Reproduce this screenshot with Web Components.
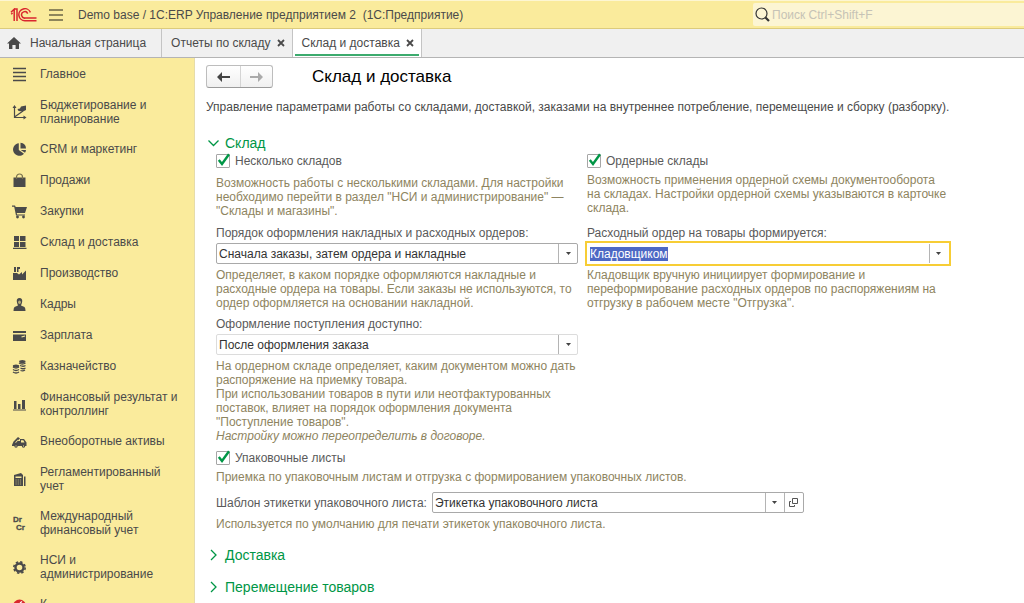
<!DOCTYPE html>
<html lang="ru">
<head>
<meta charset="utf-8">
<title>Склад и доставка</title>
<style>
html, body { margin: 0; height: 100%; overflow: hidden; }
body { font: 12px/14px "Liberation Sans", Arial, sans-serif; color: #4a4a4a; background: #fff; }
</style>
</head>
<body>
<erp-app>
  <title-bar slot="top" caption="Demo base / 1С:ERP Управление предприятием 2&nbsp; (1С:Предприятие)"></title-bar>
  <tab-strip slot="top">
    <page-tab kind="home">Начальная страница</page-tab>
    <page-tab kind="closable">Отчеты по складу</page-tab>
    <page-tab kind="closable" active>Склад и доставка</page-tab>
  </tab-strip>
  <side-nav slot="nav">
    <nav-item icon="menu">Главное</nav-item>
    <nav-item icon="plan">Бюджетирование и планирование</nav-item>
    <nav-item icon="pie">CRM и маркетинг</nav-item>
    <nav-item icon="bag">Продажи</nav-item>
    <nav-item icon="cart">Закупки</nav-item>
    <nav-item icon="boxes">Склад и доставка</nav-item>
    <nav-item icon="factory">Производство</nav-item>
    <nav-item icon="person">Кадры</nav-item>
    <nav-item icon="card">Зарплата</nav-item>
    <nav-item icon="coins">Казначейство</nav-item>
    <nav-item icon="bars">Финансовый результат и контроллинг</nav-item>
    <nav-item icon="truck">Внеоборотные активы</nav-item>
    <nav-item icon="calc">Регламентированный учет</nav-item>
    <nav-item icon="drcr">Международный финансовый учет</nav-item>
    <nav-item icon="gear">НСИ и администрирование</nav-item>
    <nav-item icon="red">К</nav-item>
  </side-nav>
  <settings-page caption="Склад и доставка">
    <span slot="intro">Управление параметрами работы со складами, доставкой, заказами на внутреннее потребление, перемещение и сборку (разборку).</span>
    <form-section caption="Склад" open>
      <form-columns>
        <check-field label="Несколько складов" spaced>Возможность работы с несколькими складами. Для настройки<br>необходимо перейти в раздел "НСИ и администрирование" —<br>"Склады и магазины".</check-field>
        <check-field label="Ордерные склады">Возможность применения ордерной схемы документооборота<br>на складах. Настройки ордерной схемы указываются в карточке<br>склада.</check-field>
        <select-field label="Порядок оформления накладных и расходных ордеров:" value="Сначала заказы, затем ордера и накладные">Определяет, в каком порядке оформляются накладные и<br>расходные ордера на товары. Если заказы не используются, то<br>ордер оформляется на основании накладной.</select-field>
        <combo-field label="Расходный ордер на товары формируется:" value="Кладовщиком">Кладовщик вручную инициирует формирование и<br>переформирование расходных ордеров по распоряжениям на<br>отгрузку в рабочем месте "Отгрузка".</combo-field>
        <select-field muted label="Оформление поступления доступно:" value="После оформления заказа">На ордерном складе определяет, каким документом можно дать<br>распоряжение на приемку товара.<br>При использовании товаров в пути или неотфактурованных<br>поставок, влияет на порядок оформления документа<br>"Поступление товаров".<br><i>Настройку можно переопределить в договоре.</i></select-field>
      </form-columns>
      <check-field label="Упаковочные листы">Приемка по упаковочным листам и отгрузка с формированием упаковочных листов.</check-field>
      <select-field inline label="Шаблон этикетки упаковочного листа:" value="Этикетка упаковочного листа">Используется по умолчанию для печати этикеток упаковочного листа.</select-field>
    </form-section>
    <form-section caption="Доставка"></form-section>
    <form-section caption="Перемещение товаров"></form-section>
  </settings-page>
</erp-app>

<script>
const reset = `<style>
*, *::before, *::after { box-sizing: border-box; }
:host { display: block; }
button, input, select { font: inherit; color: inherit; margin: 0; padding: 0; border: 0; background: none; border-radius: 0; outline: 0; }
svg { display: block; flex: none; }
</style>`;

function define(name, render, ready) {
  customElements.define(name, class extends HTMLElement {
    connectedCallback() {
      if (this.shadowRoot) return;
      const template = document.createElement('template');
      template.innerHTML = reset + render(this);
      this.attachShadow({ mode: 'open' }).append(template.content.cloneNode(true));
      if (ready) ready(this.shadowRoot);
    }
  });
}
const attr = (el, name) => el.getAttribute(name) || '';

define('erp-app', () => `<style>
:host { display: flex; flex-direction: column; height: 100vh; }
.body { flex: 1; min-height: 0; display: grid; grid-template-columns: 195px minmax(0, 1fr); }
</style>
<slot name="top"></slot>
<div class="body"><slot name="nav"></slot><slot></slot></div>`);

define('title-bar', el => `<style>
:host { flex: none; }
header { display: flex; align-items: center; height: 29px; padding-left: 10px; background: #faeb9c; border-top: 1px solid #fdf6d2; border-bottom: 1px solid #dccb7c; }
.menu { margin-left: 12px; }
.caption { flex: 1; margin-left: 15px; white-space: nowrap; }
label { display: flex; align-items: center; width: 271px; height: 23px; padding-left: 2px; background: #fcf5d3; border-radius: 2px 0 0 2px; }
input { flex: 1; min-width: 0; margin-left: 2px; }
input::placeholder { color: #c6c3b6; opacity: 1; }
</style>
<header>
  <svg width="27" height="14" viewBox="0 0 27 14" fill="none" stroke="#d9272e" stroke-width="1.5" role="img" aria-label="1С"><path d="M1 4.2 4.2 1.2V13M1.2 6.2 2.6 5M4 1H7V13M20.4 4.4A6 6 0 1 0 15 12.7H26.500M17.700 5.600A3.200 3.200 0 1 0 15.500 10H26.500"/></svg>
  <button class="menu" aria-label="Меню"><svg width="14" height="12" viewBox="0 0 14 12" stroke="#6b6646" stroke-width="1.4"><path d="M0 1H14M0 6H14M0 11H14"/></svg></button>
  <span class="caption">${attr(el, 'caption')}</span>
  <label><svg width="15" height="15" viewBox="0 0 15 15" fill="none" stroke="#333"><circle cx="6.500" cy="6.500" r="5.500" stroke-width="1.200"/><path d="M10.500 10.500 14 14" stroke-width="2.200"/></svg><input type="search" placeholder="Поиск Ctrl+Shift+F" aria-label="Поиск"></label>
</header>`);

define('tab-strip', () => `<style>
:host { flex: none; }
nav { display: flex; height: 29px; background: #f0f0f0; border-bottom: 1px solid #b4b4b4; }
</style><nav><slot></slot></nav>`);

define('page-tab', el => `<style>
:host { display: flex; border-right: 1px solid #c4c4c4; padding: 0 2px; }
:host([active]) { background: #fff; }
.tab { display: flex; align-items: center; padding: 0 5px 0 7px; white-space: nowrap; border-bottom: 2px solid transparent; border-top: 2px solid transparent; margin-bottom: 1px; }
:host([active]) .tab { border-bottom-color: #3cab6e; }
:host([kind=home]) .tab { padding: 0 13px 0 5px; }
.home { margin-right: 9px; }
.close { margin-left: 6px; }
button { display: flex; align-items: center; }
</style>
<div class="tab">${attr(el, 'kind') === 'home'
  ? '<svg class="home" width="14" height="12" viewBox="0 0 14 12" fill="#4a4a4a"><path d="M7 0 14 6.500H12V12H8.600V8H5.400V12H2V6.500H0Z"/></svg><button><slot></slot></button>'
  : '<button><slot></slot></button><button class="close" aria-label="Закрыть"><svg width="8" height="8" viewBox="0 0 8 8" stroke="#4a4a4a" stroke-width="1.800"><path d="M1 1 7 7M7 1 1 7"/></svg></button>'}</div>`);

define('side-nav', () => `<style>
:host { min-height: 0; overflow: hidden; background: #faeb9c; border-right: 1px solid #e6dcaa; padding-top: 1px; }
</style><nav><slot></slot></nav>`);

const icons = {
  menu: '<path d="M1 1.500H14M1 5.500H14M1 9.500H14M1 13.500H14" stroke="#4a4a4a" stroke-width="1.700"/>',
  plan: '<path d="M2.500 2V12.500H13M2.500 12 11 6" fill="none" stroke="#4a4a4a" stroke-width="1.200"/><path d="M2.500 0 4.500 3H.500ZM14.500 12.500 11.500 10.500V14.500ZM5.500 4 8 3.500 9 1.500 14 .500V5L11 6.500 6.500 6Z"/>',
  pie: '<path d="M6.800 1.200V8L12 11.700A6.300 6.300 0 1 1 6.800 1.200Z"/><path d="M8.500.800A6 6 0 0 1 14 6.500H8.500ZM8.700 8H14A6 6 0 0 1 13 10.800Z"/>',
  bag: '<path d="M1.500 4.500H13.500V14H1.500Z"/><path d="M4.500 6V4A3 3 0 0 1 10.500 4V6" fill="none" stroke="#77704c" stroke-width="1.200"/>',
  cart: '<path d="M0 1.500H3L3.700 3H15L13 9H4.800L5 10.500H13V11.500H4L2.200 2.800H0Z"/><circle cx="5.500" cy="13" r="1.400"/><circle cx="11.500" cy="13" r="1.400"/>',
  boxes: '<path d="M2 1H7V6H2ZM8 1H13.500V6H8ZM2 7H7V12H2ZM8 7H13.500V12H8ZM1 12.700H14.500V14H1Z"/>',
  factory: '<path d="M1 14V7H5L7 8.500 10 6V8.500L14 4.500V14ZM2 1H4V6H2ZM5 1H8V3H6.500V6H5Z"/>',
  person: '<path d="M7.500 1C9.500 1 10.500 2.500 10.200 4.500 10 6.500 9.200 7.500 9 8.500L12.500 10Q13.500 11 13.500 14H1.500Q1.500 11 2.500 10L6 8.500C5.800 7.500 5 6.500 4.800 4.500 4.500 2.500 5.500 1 7.500 1Z"/><ellipse cx="7.500" cy="5.200" rx="1.400" ry="1.800" fill="#b9ae77"/>',
  card: '<path d="M1 3H14V5H1ZM1 6.500H14V13H1Z"/><path d="M9.500 9 13 8" stroke="#faeb9c" stroke-width="1.200"/>',
  coins: '<g fill="none" stroke="#4a4a4a" stroke-width="1.300"><path d="M1 8Q4 10 7 8M1 10.500Q4 12.500 7 10.500M1 13Q4 15 7 13M7 4Q10.300 6 13.500 4M8 6.500Q11 8 13.500 6.500M8.500 9Q11 10.500 13.500 9M8.500 11.500Q11 12.500 13 11"/></g><ellipse cx="4" cy="7" rx="3.200" ry="1.500"/><ellipse cx="10.300" cy="2.500" rx="3.200" ry="1.500"/>',
  bars: '<path d="M2 4H4.500V12H2ZM6 7H8.500V12H6ZM10 3H13V12H10ZM1 12.500H14V13.500H1Z"/>',
  truck: '<path d="M0 11 1.500 7.500 6 3 8 4.500 5.500 7H8V5H12L14.500 8.500V12H0Z"/><circle cx="4" cy="12" r="1.700"/><circle cx="11.500" cy="12" r="1.700"/><path d="M9 6.300H11.300L12.500 8.500H9ZM3 8.500 6 5.500 6.500 6 4 8.700Z" fill="#faeb9c"/><path d="M3.500 12H4.500M11 12H12" stroke="#faeb9c"/>',
  calc: '<path d="M2 3 9 1 11 3V14H2ZM12 4.500H13.500V14H12Z"/><path d="M3.500 4.500H9.500V6H3.500Z" fill="#faeb9c"/><path d="M3.500 8H9.500M3.500 10H9.500M3.500 12H9.500" stroke="#c6bb7e" stroke-width=".8" stroke-dasharray="1.200 1"/>',
  drcr: '<text x="1" y="6" font-size="8" font-weight="700" stroke="#4a4a4a" stroke-width=".3" font-family="Liberation Sans">Dr</text><text x="4" y="14" font-size="8" font-weight="700" stroke="#4a4a4a" stroke-width=".3" font-family="Liberation Sans">Cr</text>',
  gear: '<circle cx="7.500" cy="7.500" r="4" fill="none" stroke="#4a4a4a" stroke-width="2.400"/><circle cx="7.500" cy="7.500" r="5.700" fill="none" stroke="#4a4a4a" stroke-width="1.600" stroke-dasharray="2.400 2.076"/>',
  red: '<circle cx="7.500" cy="9" r="6.500" fill="#d9272e"/><path d="M8 6 10 4.500" stroke="#fff" stroke-width="1.200"/>'
};

define('nav-item', el => `<style>
a { display: flex; min-height: 31px; padding: 8px 16px 8px 12px; color: inherit; text-decoration: none; }
svg { align-self: center; margin-right: 12px; overflow: visible; }
</style>
<a href="#"><svg width="16" height="15" viewBox="0 0 16 15" fill="#4a4a4a">${icons[attr(el, 'icon')]}</svg><span><slot></slot></span></a>`);

define('settings-page', el => `<style>
:host { min-width: 0; min-height: 0; overflow: hidden; padding: 7px 12px 0 11px; }
.bar { display: flex; align-items: center; }
.nav { display: flex; border: 1px solid #bdbdbd; border-bottom-color: #9a9a9a; border-radius: 3px; background: linear-gradient(#fff, #f0f0f0); }
.nav button { display: grid; place-items: center; width: 33px; height: 21px; }
.nav button + button { width: 32px; border-left: 1px solid #d4d4d4; }
h1 { margin: 0 0 0 39px; font-size: 17px; line-height: 20px; font-weight: 400; color: #000; }
p { margin: 12px 0 20px; }
</style>
<main>
  <div class="bar">
    <div class="nav">
      <button aria-label="Назад"><svg width="13" height="10" viewBox="0 0 13 10" fill="#444"><path d="M5 0V4H13V6H5V10L0 5Z"/></svg></button>
      <button aria-label="Вперед"><svg width="13" height="10" viewBox="0 0 13 10" fill="#aaa"><path d="M8 0V4H0V6H8V10L13 5Z"/></svg></button>
    </div>
    <h1>${attr(el, 'caption')}</h1>
  </div>
  <p><slot name="intro"></slot></p>
  <slot></slot>
</main>`);

define('form-section', el => `<style>
:host { margin-bottom: 12px; }
h2 { margin: 0; font-size: 14px; line-height: 20px; font-weight: 400; color: #009646; }
h2 button { display: flex; align-items: center; }
svg { margin: 0 6px 0 2px; }
:host([open]) { margin-bottom: 14px; }
:host([open]) h2 { line-height: 18px; }
.content { padding: 1px 0 0 10px; }
:host(:not([open])) .content { display: none; }
</style>
<section>
  <h2><button aria-expanded="${el.hasAttribute('open')}"><svg width="11" height="12" viewBox="0 0 11 12" fill="none" stroke="#009646" stroke-width="1.300"><path d="${el.hasAttribute('open') ? 'M.500 3.500 5.500 8.500 10.500 3.500' : 'M3 1 8 6 3 11'}"/></svg>${attr(el, 'caption')}</button></h2>
  <div class="content"><slot></slot></div>
</section>`);

define('form-columns', () => `<style>
:host { display: grid; grid-template-columns: minmax(0, 362px) minmax(0, 362px); column-gap: 9px; }
</style><slot></slot>`);

const hintStyle = `.hint { color: #8e8460; white-space: nowrap; }`;

define('check-field', el => `<style>
:host { margin-bottom: 8px; }
label { display: flex; align-items: center; height: 16px; color: #5a5a5a; }
.box { display: grid; width: 14px; height: 14px; margin-right: 5px; }
.box > * { grid-area: 1 / 1; }
input { appearance: none; width: 14px; height: 14px; border: 1px solid #a6a6a6; border-radius: 1px; background: #fff; }
svg { display: none; overflow: visible; pointer-events: none; }
input:checked + svg { display: block; }
.hint { margin-top: 4px; }
:host([spaced]) .hint { margin-top: 7px; }
${hintStyle}
</style>
<label><span class="box"><input type="checkbox" checked aria-describedby="hint"><svg width="14" height="14" viewBox="0 0 14 14" fill="none" stroke="#009646" stroke-width="2.400"><path d="M2.800 6 6 10 13 .300"/></svg></span>${attr(el, 'label')}</label>
<div class="hint" id="hint"><slot></slot></div>`);

const fieldStyle = `
:host { margin-bottom: 7px; }
label { color: #5a5a5a; white-space: nowrap; }
.box { display: grid; grid-template-columns: minmax(0, 1fr) 19px; height: 21px; margin: 3px 0 4px; border: 1px solid #a9a9a9; border-radius: 2px; background: #fff; color: #333; }
.arrow { display: grid; place-items: center; border-left: 1px solid #b4b4b4; }
${hintStyle}`;
const arrow = '<svg width="5" height="3" viewBox="0 0 5 3" fill="#444"><path d="M0 0H5L2.500 3Z"/></svg>';

define('select-field', el => `<style>${fieldStyle}
select { appearance: none; grid-area: 1 / 1 / 2 / 3; padding-left: 2px; }
.arrow { grid-area: 1 / 2; pointer-events: none; }
:host([muted]) .box { border-color: #dcdcdc; }
:host([inline]) .row { display: flex; align-items: center; }
:host([inline]) .box { flex: 0 1 372px; margin: 0 0 0 5px; grid-template-columns: minmax(0, 1fr) 19px 19px; }
:host([inline]) .hint { margin-top: 4px; }
:host([inline]) { margin-bottom: 0; }
.open { display: grid; place-items: center; border-left: 1px solid #b4b4b4; }
</style>
<div class="row">
  <label for="field">${attr(el, 'label')}</label>
  <div class="box">
    <select id="field" aria-describedby="hint"><option>${attr(el, 'value')}</option></select>
    <span class="arrow">${arrow}</span>
    ${el.hasAttribute('inline') ? '<button class="open" aria-label="Открыть"><svg width="9" height="9" viewBox="0 0 9 9" fill="none" stroke="#555"><path d="M3.500.500H8.500V5.500H3.500ZM2 3.500H.500V8.500H5.500V7"/></svg></button>' : ''}
  </div>
</div>
<div class="hint" id="hint"><slot></slot></div>`);

define('combo-field', el => `<style>${fieldStyle}
.box { height: 25px; margin: 1px -2px 2px; border: 2px solid #f7cd35; border-radius: 0; grid-template-columns: minmax(0, 1fr) 20px; }
input { padding-left: 3px; min-width: 0; }
input::selection { background: #4d68c4; color: #fff; }
.arrow { margin: 1px 0; padding-right: 3px; }
</style>
<label for="field">${attr(el, 'label')}</label>
<div class="box">
  <input id="field" type="text" role="combobox" aria-expanded="false" aria-describedby="hint" value="${attr(el, 'value')}">
  <button class="arrow" aria-label="Выбрать">${arrow}</button>
</div>
<div class="hint" id="hint"><slot></slot></div>`, root => {
  const input = root.querySelector('input');
  input.focus({ preventScroll: true });
  input.select();
});
</script>
</body>
</html>
